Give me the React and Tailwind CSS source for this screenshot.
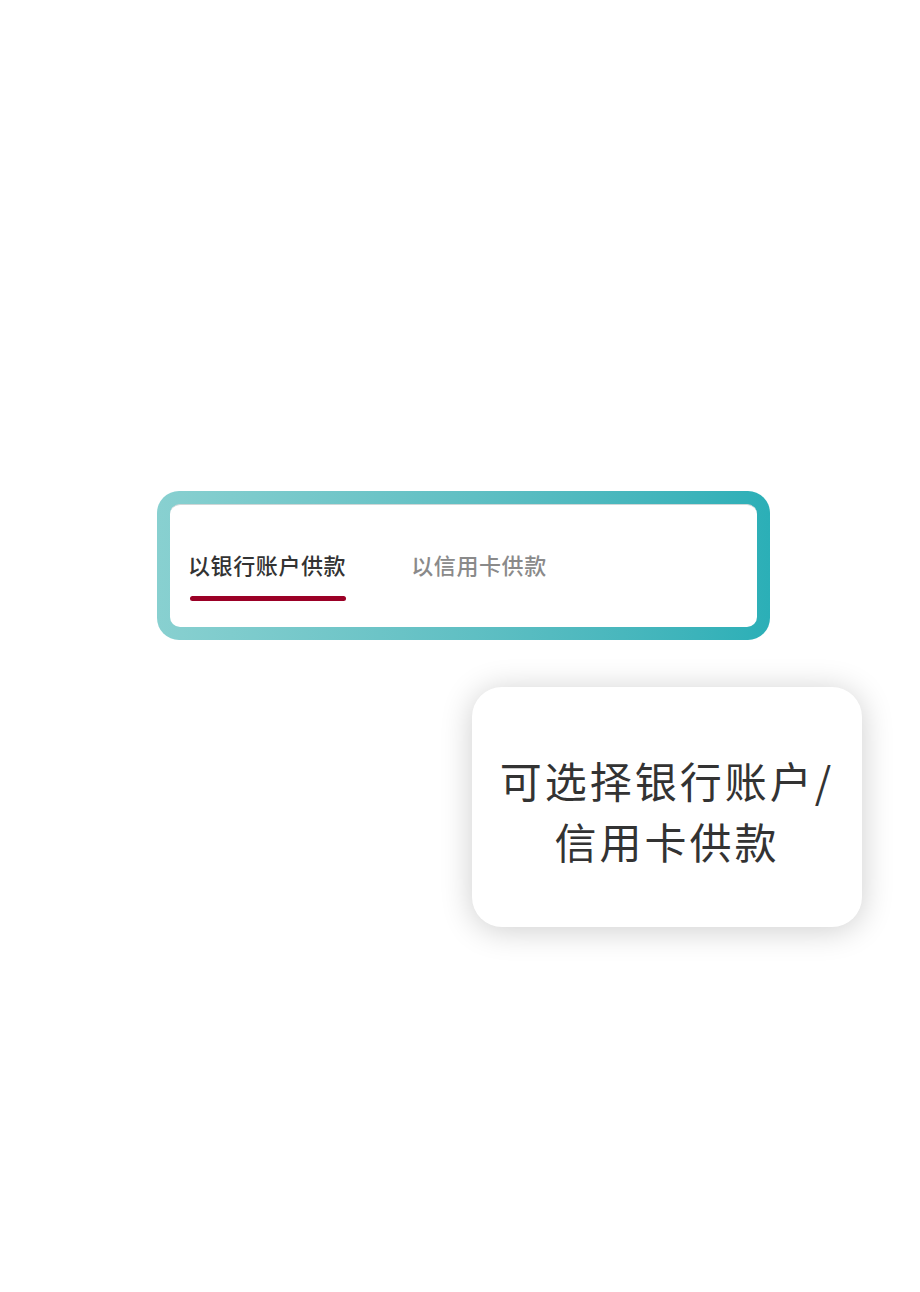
export default function App() {
  return (
    <div className="w-[920px] h-[1292px] bg-white pt-[491px] font-['Noto_Sans_CJK_SC',sans-serif]">
      {/* Payment method tabs */}
      <div className="ml-[157px] w-[613px] rounded-[22px] bg-gradient-to-r from-[#88d0d0] to-[#2bafb7] p-[13px]">
        <div className="rounded-[10px] bg-white border-t border-[#cfd6d6] pl-[18px] pt-[44px] pb-[26px]">
          <div className="flex items-start gap-[65px]">
            <div className="flex flex-col">
              <span className="text-[22px] leading-[30px] tracking-[0.6px] font-medium text-[#333333]">以银行账户供款</span>
              <div className="ml-[2px] mt-[17px] h-[5px] w-[156px] rounded-full bg-[#9b0026]" />
            </div>
            <span className="text-[22px] leading-[30px] tracking-[0.6px] font-medium text-[#8a8a8a]">以信用卡供款</span>
          </div>
        </div>
      </div>

      {/* Callout card */}
      <div className="ml-[472px] mt-[47px] w-[390px] h-[240px] rounded-[30px] bg-white shadow-[0_3px_32px_rgba(0,0,0,0.2)] flex flex-col items-center justify-center pt-[5px]">
        <p className="text-[42px] leading-[61px] tracking-[3px] text-[#333333] text-center">
          可选择银行账户/
          <br />
          信用卡供款
        </p>
      </div>
    </div>
  );
}
